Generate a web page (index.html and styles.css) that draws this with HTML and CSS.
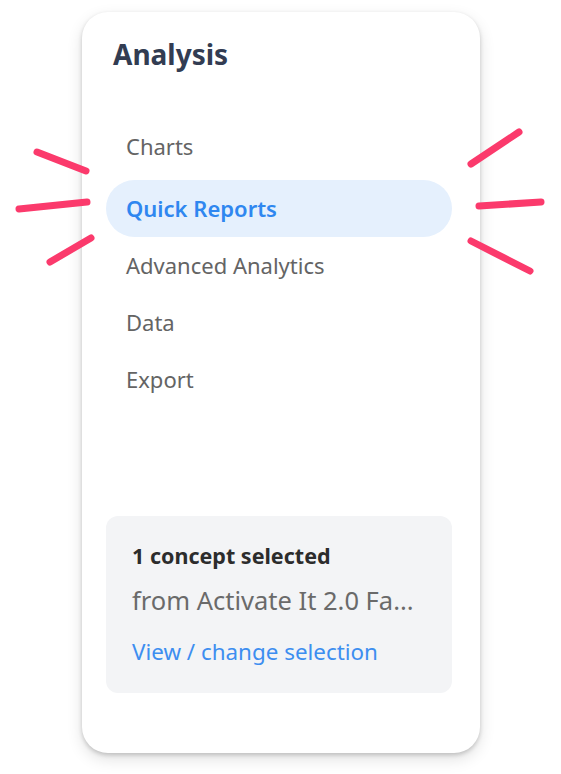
FILE: index.html
```html
<!DOCTYPE html>
<html lang="en">
<head>
<meta charset="utf-8">
<title>Analysis</title>
<link rel="stylesheet" href="styles.css">
</head>
<body>
  <div class="card">
    <h1 class="title">Analysis</h1>
    <nav class="nav">
      <a class="nav-item">Charts</a>
      <a class="nav-item active">Quick Reports</a>
      <a class="nav-item">Advanced Analytics</a>
      <a class="nav-item">Data</a>
      <a class="nav-item">Export</a>
    </nav>
    <div class="spacer"></div>
    <div class="selection">
      <div class="sel-count">1 concept selected</div>
      <div class="sel-source">from Activate It 2.0 Fa...</div>
      <a class="sel-link">View / change selection</a>
    </div>
  </div>
  <svg class="sparks" width="561" height="774" viewBox="0 0 561 774" aria-hidden="true">
    <g stroke="#fb3a6c" stroke-width="7" stroke-linecap="round" fill="none">
      <line x1="37" y1="152" x2="86" y2="171"/>
      <line x1="19" y1="209" x2="87" y2="202"/>
      <line x1="50" y1="262" x2="91" y2="238"/>
      <line x1="471" y1="164" x2="519" y2="132"/>
      <line x1="479" y1="206" x2="541" y2="202"/>
      <line x1="471" y1="241" x2="530" y2="271"/>
    </g>
  </svg>
</body>
</html>
```
FILE: styles.css
```css
html, body {
  margin: 0;
  padding: 0;
  background: #ffffff;
}

body {
  position: relative;
  width: 561px;
  height: 774px;
  font-family: "Noto Sans", "Open Sans", sans-serif;
  overflow: hidden;
}

.card {
  box-sizing: border-box;
  margin: 12px 0 0 82px;
  width: 398px;
  height: 741px;
  background: #ffffff;
  border-radius: 26px;
  box-shadow: 0 2px 4px rgba(0, 0, 0, 0.18), 0 6px 16px rgba(0, 0, 0, 0.12);
  padding: 24px 28px 60px 24px;
  display: flex;
  flex-direction: column;
}

.title {
  margin: 0 0 45px 7px;
  font-size: 28px;
  line-height: 36px;
  font-weight: 700;
  color: #323c52;
}

.nav {
  display: flex;
  flex-direction: column;
}

.nav-item {
  height: 57px;
  display: flex;
  align-items: center;
  padding-left: 20px;
  border-radius: 29px;
  font-size: 22px;
  line-height: 30px;
  color: #646464;
  text-decoration: none;
}

.nav-item:first-child {
  margin-bottom: 5.5px;
}

.nav-item.active {
  background: #e5f0fd;
  color: #2f87f0;
  font-weight: 600;
}

.spacer {
  flex: 1;
}

.selection {
  background: #f3f4f6;
  border-radius: 12px;
  padding: 26px 26px 26px 26px;
}

.sel-count {
  font-size: 21.5px;
  line-height: 28px;
  font-weight: 700;
  color: #2c2c2c;
}

.sel-source {
  margin-top: 14px;
  font-size: 25.5px;
  line-height: 32px;
  color: #6a6a6a;
  white-space: nowrap;
}

.sel-link {
  display: block;
  margin-top: 21px;
  font-size: 22.4px;
  line-height: 30px;
  color: #3d8ef0;
}

.sparks {
  position: absolute;
  left: 0;
  top: 0;
  pointer-events: none;
}
```
